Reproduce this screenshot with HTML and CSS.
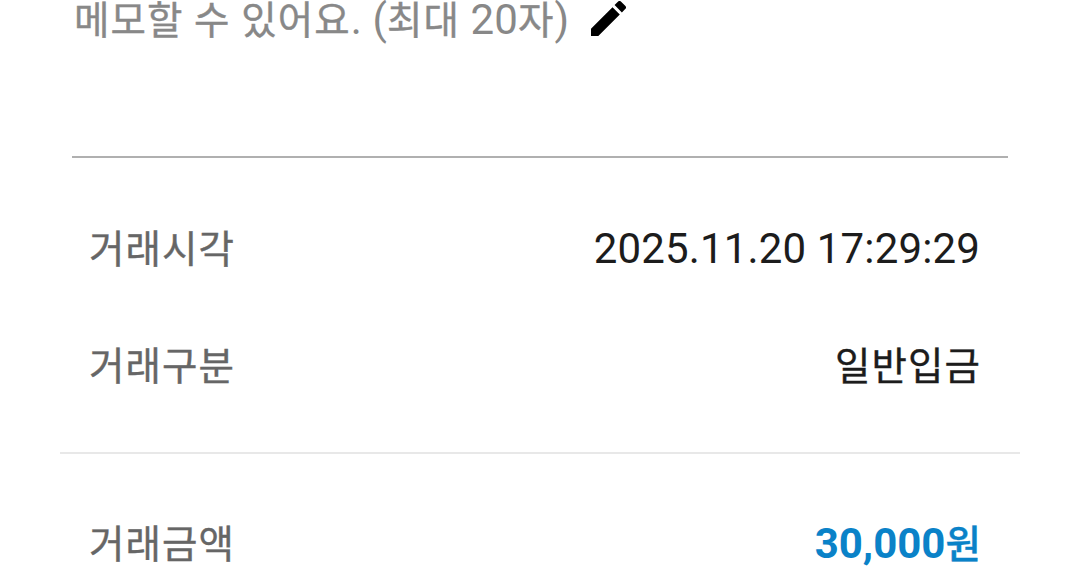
FILE: index.html
```html
<!DOCTYPE html>
<html lang="ko">
<head>
  <meta charset="UTF-8">
  <meta name="viewport" content="width=device-width, initial-scale=1.0">
  <title>거래내역 상세</title>
  <link rel="stylesheet" href="styles.css">
</head>
<body>
  <main class="detail">
    <!-- 메모 입력 -->
    <section class="memo">
      <span class="memo__text"><span class="ko">메모할</span> <span class="ko">수</span> <span class="ko">있어요</span>. (<span class="ko">최대</span> 20<span class="ko">자</span>)</span>
      <svg class="memo__icon" viewBox="3 3 18 18" xmlns="http://www.w3.org/2000/svg">
        <path d="M3 17.25V21h3.75L17.81 9.94l-3.75-3.75L3 17.25zM20.71 7.04a1 1 0 0 0 0-1.41l-2.34-2.34a1 1 0 0 0-1.41 0l-1.83 1.83 3.75 3.75 1.83-1.83z"/>
      </svg>
    </section>

    <!-- 거래 정보 -->
    <dl class="info">
      <div class="info__row">
        <dt class="info__label"><span class="ko">거래시각</span></dt>
        <dd class="info__value info__value--time">2025.11.20 17:29:29</dd>
      </div>
      <div class="info__row">
        <dt class="info__label"><span class="ko">거래구분</span></dt>
        <dd class="info__value"><span class="ko">일반입금</span></dd>
      </div>
    </dl>

    <!-- 거래 금액 -->
    <dl class="amount">
      <div class="info__row">
        <dt class="info__label"><span class="ko">거래금액</span></dt>
        <dd class="info__value info__value--amount">30,000<span class="ko">원</span></dd>
      </div>
    </dl>
  </main>
</body>
</html>
```
FILE: styles.css
```css
* {
  box-sizing: border-box;
}
body {
  margin: 0;
  height: 578px;
  overflow: hidden;
  background: #fff;
  color: #1c1c1c;
  font-family: Roboto, "Noto Sans CJK KR", sans-serif;
  font-size: 42px;
}
dl,
dd {
  margin: 0;
}
.detail {
  padding: 0 60px;
}
/* 한글은 숫자보다 조금 작게 */
.ko {
  font-family: "Noto Sans CJK KR", sans-serif;
  font-size: 38.5px;
  letter-spacing: 1.1px;
  line-height: 0;
  -webkit-text-stroke: 0.4px currentColor;
}
/* 메모 입력 */
.memo {
  display: flex;
  align-items: flex-start;
  gap: 22px;
  height: 158px;
  margin: 0 12px;
  padding-left: 2px;
  border-bottom: 2px solid #b0b0b0;
}
.memo__text {
  line-height: 40px;
  color: #888;
  letter-spacing: 0.1px;
  white-space: nowrap;
}
.memo__icon {
  width: 35px;
  height: 35px;
  margin-top: 1px;
  fill: #000;
}
/* 거래 정보 */
.info {
  height: 296px;
  padding: 32px 39px 0 29px;
  border-bottom: 2px solid #e8e8e8;
}
.amount {
  padding: 31px 38px 0 29px;
}
.info__row {
  display: flex;
  justify-content: space-between;
  height: 117px;
  line-height: 117px;
  white-space: nowrap;
}
.info__label {
  color: #666;
}
.info__value--time {
  margin-right: 1px;
  letter-spacing: 0.15px;
}
.info__value--amount {
  color: #0a82c8;
  font-weight: 700;
}
.info__value--amount .ko {
  font-weight: 500;
}
```
